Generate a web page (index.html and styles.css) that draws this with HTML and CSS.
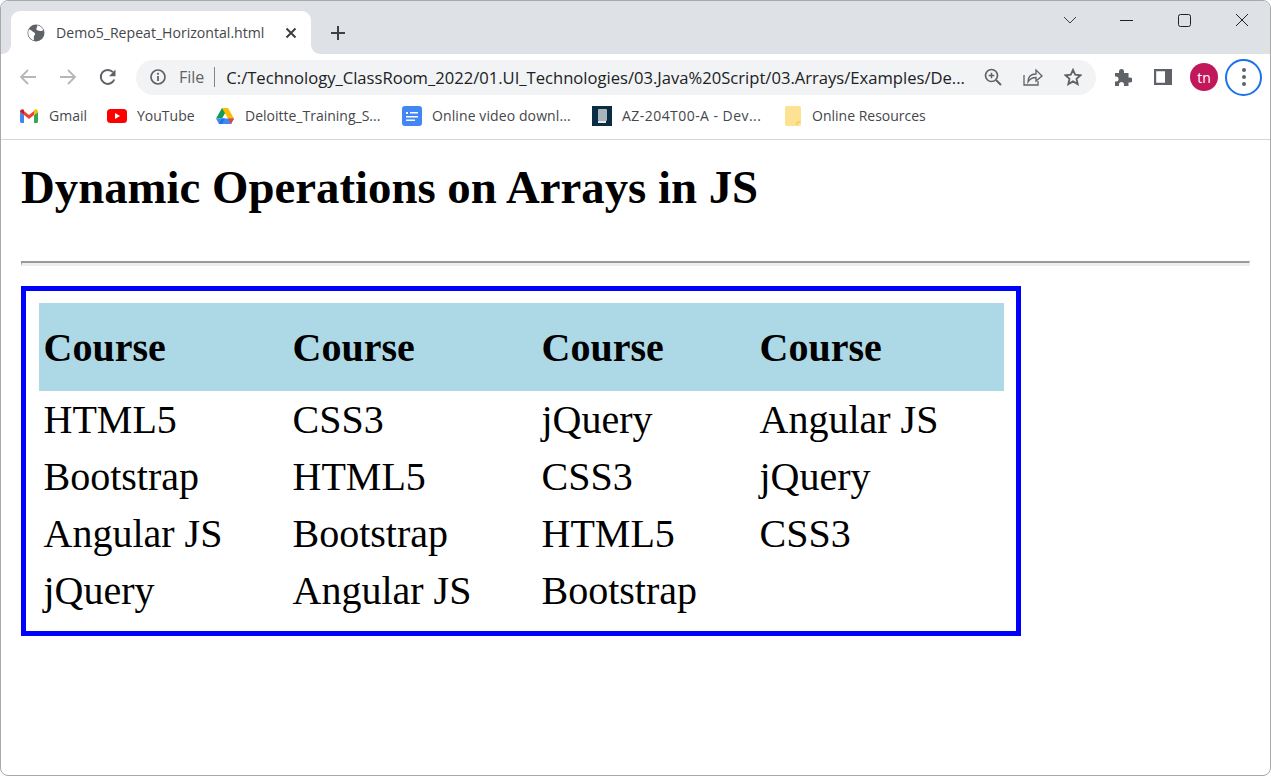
FILE: index.html
```html
<!DOCTYPE html>
<html lang="en">
<head>
    <meta charset="UTF-8">
    <title>Demo5_Repeat_Horizontal.html</title>
    <link rel="stylesheet" href="styles.css">
</head>
<body>
<div class="window">
    <div class="titlebar">
        <div class="tab">
            <svg class="tab-icon" width="18" height="18" viewBox="0 0 18 18"><circle cx="9" cy="9" r="8.500" fill="#5f6368"/><path d="M1.800 5.500c1.500.2 2.700.8 3.800 2 .9 1 2.400 1 2.500 2.500.1 1.300-1.400 1.400-1.300 3l.2 3.500C4 15.500 1.800 13 1.300 10c-.2-1.500 0-3.200.5-4.500zM10.500 1.200c2.700.5 5 2.400 5.900 5l-2.200.8c-1.300.3-2.300-.6-3.500-.6-1.300-.1-1.800-1.300-1-2.300z" fill="#fff"/></svg>
            <span class="tab-title">Demo5_Repeat_Horizontal.html</span>
            <svg class="tab-close" width="12" height="12" viewBox="0 0 12 12"><path d="M1.500 1.500l9 9M10.500 1.500l-9 9" stroke="#3c4043" stroke-width="2"/></svg>
        </div>
        <svg class="new-tab" width="16" height="16" viewBox="0 0 16 16"><path d="M8 1v14M1 8h14" stroke="#3c4043" stroke-width="2"/></svg>
        <div class="window-controls">
            <svg class="chevron" width="14" height="8" viewBox="0 0 14 8"><path d="M1 1l6 6 6-6" fill="none" stroke="#3c4043"/></svg>
            <svg width="14" height="14" viewBox="0 0 14 14"><path d="M1 7.500h13" stroke="#222"/></svg>
            <svg width="14" height="14" viewBox="0 0 14 14"><rect x="1.500" y="1.500" width="12" height="12" rx="2" fill="none" stroke="#222"/></svg>
            <svg width="14" height="14" viewBox="0 0 14 14"><path d="M1 1l12 12M13 1L1 13" stroke="#222"/></svg>
        </div>
    </div>

    <div class="toolbar">
        <svg class="nav-icon" width="18" height="18" viewBox="0 0 18 18"><path d="M17 9H2M9 2L2 9l7 7" fill="none" stroke="#b5b7ba" stroke-width="1.800"/></svg>
        <svg class="nav-icon" width="18" height="18" viewBox="0 0 18 18"><path d="M1 9h15M9 2l7 7-7 7" fill="none" stroke="#b5b7ba" stroke-width="1.800"/></svg>
        <svg class="nav-icon" width="18" height="18" viewBox="0 0 18 18"><path d="M15.300 11.500A7 7 0 1 1 14 4.200" fill="none" stroke="#5f6368" stroke-width="2"/><path d="M16.500 1.500v6.700H10z" fill="#5f6368"/></svg>
        <div class="omnibox">
            <svg width="16" height="16" viewBox="0 0 16 16"><circle cx="8" cy="8" r="7" fill="none" stroke="#5f6368" stroke-width="1.700"/><path d="M8 7v5" stroke="#5f6368" stroke-width="1.800"/><circle cx="8" cy="4.800" r="1.100" fill="#5f6368"/></svg>
            <span class="scheme">File</span>
            <span class="divider"></span>
            <span class="url">C:/Technology_ClassRoom_2022/01.UI_Technologies/03.Java%20Script/03.Arrays/Examples/De...</span>
            <svg class="omni-icon" width="18" height="18" viewBox="0 0 18 18"><circle cx="7.500" cy="7.500" r="6" fill="none" stroke="#5f6368" stroke-width="1.700"/><path d="M12 12l5 5" stroke="#5f6368" stroke-width="2"/><path d="M7.500 4.700v5.600M4.700 7.500h5.600" stroke="#5f6368" stroke-width="1.500"/></svg>
            <svg class="omni-icon" width="20" height="18" viewBox="0 0 20 18"><path d="M1 7v10h14v-4" fill="none" stroke="#5f6368" stroke-width="1.300"/><path d="M5 14c0-5 3-8 8-8V2l6 6-6 5V9.500c-3 0-6 1-8 4.500z" fill="none" stroke="#5f6368" stroke-width="1.300"/></svg>
            <svg class="omni-icon" width="18" height="18" viewBox="0 0 18 18"><path d="M9 1.800l2.200 4.900 5.300.6-4 3.500 1.200 5.300L9 13.400l-4.700 2.700 1.200-5.300-4-3.500 5.300-.6z" fill="none" stroke="#5f6368" stroke-width="1.800"/></svg>
        </div>
        <svg class="tool-icon" width="18" height="18" viewBox="0 0 18 18"><path d="M1 5h4V3.500a2.500 2.500 0 0 1 5 0V5h4.500v4.500H16a2.500 2.500 0 0 1 0 5h-1.500V18H10v-1.500a2.500 2.500 0 0 0-5 0V18H1v-4.500h1a2.500 2.500 0 0 0 0-5H1z" fill="#5f6368"/></svg>
        <svg class="tool-icon" width="18" height="16" viewBox="0 0 18 16"><path fill-rule="evenodd" d="M0 0h18v16H0zM2.200 2.200v11.600H11V2.200z" fill="#5f6368"/></svg>
        <span class="avatar">tn</span>
        <span class="menu-btn"><i></i><i></i><i></i></span>
    </div>

    <div class="bookmarks">
        <a class="bookmark bm-gmail">
            <svg width="18" height="14" viewBox="0 0 18 14"><path d="M0 3v9.500C0 13.300.7 14 1.500 14H4V6z" fill="#4285f4"/><path d="M14 6v8h2.500c.8 0 1.500-.7 1.500-1.500V3z" fill="#34a853"/><path d="M4 6v-4L9 6l5-4v4L9 10z" fill="#ea4335"/><path d="M0 3c0-2.500 2.500-3.500 4-2v5z" fill="#c5221f"/><path d="M14 1c1.500-1.500 4-.5 4 2l-4 3z" fill="#fbbc04"/></svg>
            Gmail
        </a>
        <a class="bookmark bm-youtube">
            <svg width="20" height="14" viewBox="0 0 20 14"><rect width="20" height="14" rx="3.500" fill="#f00"/><path d="M8 4l5 3-5 3z" fill="#fff"/></svg>
            YouTube
        </a>
        <a class="bookmark bm-drive">
            <svg width="18" height="16" viewBox="0 0 18 16"><path d="M6 0h6L6 10.500H0z" fill="#0f9d58"/><path d="M6 0h6l6 10.500h-6z" fill="#fbbc04"/><path d="M0 10.500h18L15 16H3z" fill="#4285f4"/><path d="M3 16l3-5.500h3L6 16z" fill="#1a73e8"/><path d="M12 10.500h6L15 16z" fill="#ea4335"/></svg>
            Deloitte_Training_S...
        </a>
        <a class="bookmark bm-video">
            <svg width="20" height="20" viewBox="0 0 20 20"><rect width="20" height="20" rx="3" fill="#4285f4"/><path d="M4 6h2v2H4zM8 6h8v1.500H8zM4 10h12v1.500H4zM4 13.500h9V15H4z" fill="#fff"/></svg>
            Online video downl...
        </a>
        <a class="bookmark bm-az">
            <svg width="20" height="20" viewBox="0 0 20 20"><rect width="20" height="20" fill="#0b2c42"/><rect x="6" y="3" width="9" height="12" rx="1" fill="#a9b4bb"/><path d="M6 15h8v2H6z" fill="#e4e8ea"/></svg>
            AZ-204T00-A - Dev...
        </a>
        <a class="bookmark bm-folder">
            <svg width="16" height="20" viewBox="0 0 16 20"><path d="M1.500 0H14c1 0 2 .8 2 2v16c0 1-1 2-2 2H2c-1 0-2-1-2-2V2C0 .8.500 0 1.500 0z" fill="#fde293"/><path d="M12 19v-3h3.500" fill="none" stroke="#f6c343"/></svg>
            Online Resources
        </a>
    </div>

    <div class="page">
        <h1>Dynamic Operations on Arrays in JS</h1>
        <hr>
        <table class="courses">
            <thead>
                <tr><th class="col-wide">Course</th><th class="col-wide">Course</th><th class="col-narrow">Course</th><th>Course</th></tr>
            </thead>
            <tbody>
                <tr><td>HTML5</td><td>CSS3</td><td>jQuery</td><td>Angular JS</td></tr>
                <tr><td>Bootstrap</td><td>HTML5</td><td>CSS3</td><td>jQuery</td></tr>
                <tr><td>Angular JS</td><td>Bootstrap</td><td>HTML5</td><td>CSS3</td></tr>
                <tr><td>jQuery</td><td>Angular JS</td><td>Bootstrap</td><td></td></tr>
            </tbody>
        </table>
    </div>
</div>
</body>
</html>
```

FILE: styles.css
```css
* {
    box-sizing: border-box;
}
body {
    margin: 0;
    background: #fff;
}
.window {
    height: 776px;
    border: 1px solid #a9a9a9;
    border-radius: 8px;
    overflow: hidden;
    display: flex;
    flex-direction: column;
    font-family: 'Open Sans', sans-serif;
}

/* title bar */
.titlebar {
    height: 53px;
    flex: none;
    background: #dee1e6;
    display: flex;
    align-items: flex-end;
    padding-left: 10px;
}
.tab {
    position: relative;
    width: 300px;
    height: 43px;
    background: #fff;
    border-radius: 9px 9px 0 0;
    display: flex;
    align-items: center;
    padding: 0 14px 0 16px;
}
.tab::before,
.tab::after {
    content: "";
    position: absolute;
    bottom: 0;
    width: 9px;
    height: 9px;
}
.tab::before {
    left: -9px;
    background: radial-gradient(circle at 0 0, #dee1e6 8.500px, #fff 9px);
}
.tab::after {
    right: -9px;
    background: radial-gradient(circle at 100% 0, #dee1e6 8.500px, #fff 9px);
}
.tab-title {
    margin-left: 11px;
    font-size: 14.100px;
    color: #45474a;
    flex: 1;
    white-space: nowrap;
}
.new-tab {
    margin: 0 0 13px 19px;
}
.window-controls {
    margin-left: auto;
    align-self: flex-start;
    height: 38px;
    display: flex;
    align-items: center;
    gap: 44px;
    padding-right: 21px;
}
.chevron {
    margin-right: -2px;
}

/* toolbar */
.toolbar {
    height: 46px;
    flex: none;
    display: flex;
    align-items: center;
    padding-left: 18px;
}
.nav-icon {
    margin-right: 22px;
}
.omnibox {
    width: 960px;
    height: 35px;
    margin-left: -3px;
    border-radius: 18px;
    background: #f1f3f4;
    display: flex;
    align-items: center;
    padding-left: 14px;
}
.scheme {
    margin-left: 13px;
    font-size: 16px;
    color: #5f6368;
}
.divider {
    width: 1px;
    height: 20px;
    margin: 0 11px 0 10px;
    background: #80868b;
}
.url {
    font-size: 16.600px;
    color: #202124;
    white-space: nowrap;
    flex: 1;
}
.omni-icon {
    margin-right: 21px;
}
.omni-icon:last-child {
    margin-right: 14px;
}
.tool-icon {
    margin-left: 18px;
    margin-right: 4px;
}
.avatar {
    width: 28px;
    height: 28px;
    margin-left: 14px;
    border-radius: 50%;
    background: #c2185b;
    color: #fff;
    font-size: 14px;
    display: flex;
    align-items: center;
    justify-content: center;
}
.menu-btn {
    width: 37px;
    height: 37px;
    margin-left: 7px;
    border: 2px solid #1a73e8;
    border-radius: 50%;
    display: flex;
    flex-direction: column;
    align-items: center;
    justify-content: center;
    gap: 3px;
}
.menu-btn i {
    width: 4px;
    height: 4px;
    border-radius: 50%;
    background: #5f6368;
}

/* bookmarks */
.bookmarks {
    height: 40px;
    flex: none;
    display: flex;
    align-items: center;
    padding: 0 0 8px 19px;
    border-bottom: 1px solid #d4d6d9;
}
.bookmark {
    display: flex;
    align-items: center;
    gap: 11px;
    font-size: 14px;
    color: #45474a;
    white-space: nowrap;
}
.bm-gmail { width: 87px; }
.bm-youtube { width: 109px; gap: 10px; }
.bm-drive { width: 186px; }
.bm-video { width: 190px; gap: 10px; letter-spacing: .1px; }
.bm-az { width: 192px; gap: 10px; letter-spacing: .45px; }
.bm-folder { margin-left: 1px; }

/* page */
.page {
    flex: 1;
    padding: 0 20px;
    font-family: 'Liberation Serif', serif;
    color: #000;
}
h1 {
    margin: 24px 0 51px;
    font-size: 46.800px;
    line-height: 46px;
    font-weight: bold;
}
hr {
    margin: 0 0 20px;
    height: 5px;
    border-style: solid;
    border-width: 2px 1px 3px;
    border-color: #9a9a9a #eee #eee #9a9a9a;
}
.courses {
    width: 1000px;
    border: 5px solid #00f;
    border-spacing: 0;
    padding: 12px 12px 12px 13px;
    table-layout: fixed;
    font-size: 40px;
    text-align: left;
}
.courses thead tr {
    background: #add8e6;
}
.courses th {
    height: 88px;
    padding: 0 0 0 4.500px;
    width: 249px;
}
.courses th.col-narrow {
    width: 218px;
}
.courses td {
    height: 57px;
    padding: 0 0 0 4.500px;
}
```
